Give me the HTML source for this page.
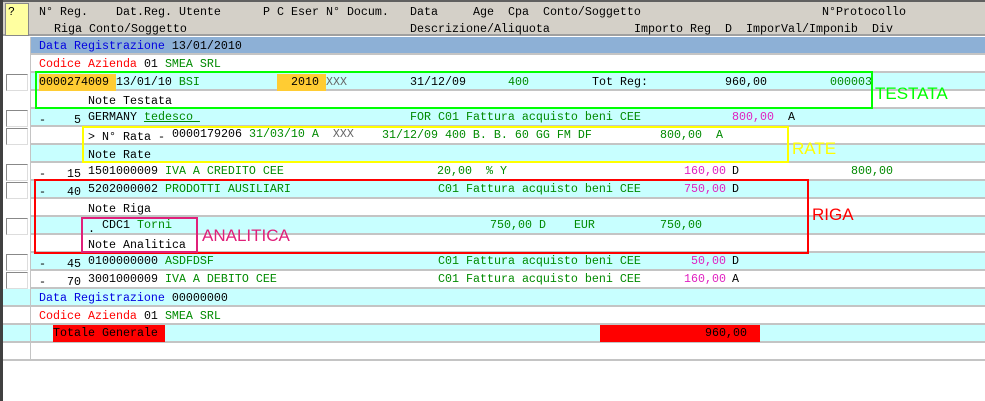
<!DOCTYPE html>
<html><head><meta charset="utf-8"><style>
*{margin:0;padding:0;box-sizing:border-box}
body{width:985px;height:401px;overflow:hidden;background:#fff;position:relative;font-family:"Liberation Mono",monospace;font-size:11.67px;line-height:14px;color:#000}
.a{position:absolute;white-space:pre}
.row{position:absolute;left:3px;width:982px;height:18px;border-bottom:2px solid #c4c4c4}
.c{background:#c8ffff}.w{background:#fff}.b{background:#8db0d6}
.g{color:#008a00}.m{color:#e020c0}.r{color:#f00}.bl{color:#0000e0}
.box{position:absolute;left:6px;width:22px;height:17px;background:#fff;border:1px solid #888;border-right-color:#ddd;border-bottom-color:#ddd}
.lbl{position:absolute;font-family:"Liberation Sans",sans-serif;font-size:17px;line-height:17px}
</style></head><body>
<div style="position:absolute;left:0;top:0;width:3px;height:401px;background:#404040"></div>
<div style="position:absolute;left:3px;top:0;width:982px;height:36px;background:#d4d0c8;border-top:2px solid #606060;border-bottom:2px solid #a0a0a0"></div>
<div style="position:absolute;left:5px;top:3px;width:24px;height:33px;background:#ffffa0;border:1px solid #888"></div>
<div class="a" style="left:8px;top:5px">?</div>
<div class="a" style="left:39px;top:5px">N° Reg.</div>
<div class="a" style="left:116px;top:5px">Dat.Reg. Utente</div>
<div class="a" style="left:263px;top:5px">P C Eser N° Docum.</div>
<div class="a" style="left:410px;top:5px">Data</div>
<div class="a" style="left:473px;top:5px">Age  Cpa  Conto/Soggetto</div>
<div class="a" style="left:822px;top:5px">N°Protocollo</div>
<div class="a" style="left:54px;top:22px">Riga Conto/Soggetto</div>
<div class="a" style="left:410px;top:22px">Descrizione/Aliquota</div>
<div class="a" style="left:634px;top:22px">Importo Reg</div>
<div class="a" style="left:725px;top:22px">D</div>
<div class="a" style="left:746px;top:22px">ImporVal/Imponib</div>
<div class="a" style="left:872px;top:22px">Div</div>

<div class="row b" style="top:37px;left:30px;width:955px"></div>
<div class="row w" style="top:55px"></div>
<div class="row c" style="top:73px"></div>
<div class="row w" style="top:91px"></div>
<div class="row c" style="top:109px"></div>
<div class="row w" style="top:127px"></div>
<div class="row c" style="top:145px"></div>
<div class="row w" style="top:163px"></div>
<div class="row c" style="top:181px"></div>
<div class="row w" style="top:199px"></div>
<div class="row c" style="top:217px"></div>
<div class="row w" style="top:235px"></div>
<div class="row c" style="top:253px"></div>
<div class="row w" style="top:271px"></div>
<div class="row c" style="top:289px"></div>
<div class="row w" style="top:307px"></div>
<div class="row c" style="top:325px"></div>
<div class="row w" style="top:343px"></div>
<div style="position:absolute;left:3px;top:37px;width:27px;height:252px;background:#fff"></div>
<div style="position:absolute;left:30px;top:37px;width:1px;height:324px;background:#c4c4c4"></div>
<div class="box" style="top:74px"></div><div class="box" style="top:110px"></div><div class="box" style="top:128px"></div>
<div class="box" style="top:164px"></div><div class="box" style="top:182px"></div><div class="box" style="top:218px"></div>
<div class="box" style="top:254px"></div><div class="box" style="top:272px"></div>

<div class="a bl" style="left:39px;top:39px">Data Registrazione <span style="color:#000">13/01/2010</span></div>
<div class="a r" style="left:39px;top:57px">Codice Azienda <span style="color:#000">01</span> <span class="g">SMEA SRL</span></div>

<div style="position:absolute;left:39px;top:74px;width:77px;height:17px;background:#ffcc33"></div>
<div style="position:absolute;left:277px;top:74px;width:49px;height:17px;background:#ffcc33"></div>
<div class="a" style="left:39px;top:75px">0000274009 13/01/10 <span class="g">BSI</span></div>
<div class="a" style="left:291px;top:75px">2010 <span style="color:#666">XXX</span></div>
<div class="a" style="left:410px;top:75px">31/12/09</div>
<div class="a g" style="left:508px;top:75px">400</div>
<div class="a" style="left:592px;top:75px">Tot Reg:</div>
<div class="a" style="left:725px;top:75px">960,00</div>
<div class="a g" style="left:830px;top:75px">000003</div>
<div class="a" style="left:88px;top:94px">Note Testata</div>

<div class="a" style="left:39px;top:113px">-    5</div>
<div class="a" style="left:88px;top:110px">GERMANY <span class="g" style="text-decoration:underline">tedesco </span></div>
<div class="a g" style="left:410px;top:110px">FOR C01 Fattura acquisto beni CEE</div>
<div class="a m" style="left:732px;top:110px">800,00</div>
<div class="a" style="left:788px;top:110px">A</div>

<div class="a" style="left:88px;top:130px">&gt; N° Rata -</div>
<div class="a" style="left:172px;top:127px">0000179206 <span class="g">31/03/10 A</span>  <span style="color:#666">XXX</span></div>
<div class="a g" style="left:382px;top:128px">31/12/09 400 B. B. 60 GG FM DF</div>
<div class="a g" style="left:660px;top:128px">800,00  A</div>
<div class="a" style="left:88px;top:148px">Note Rate</div>

<div class="a" style="left:39px;top:167px">-   15</div>
<div class="a" style="left:88px;top:164px">1501000009 <span class="g">IVA A CREDITO CEE</span></div>
<div class="a g" style="left:437px;top:164px">20,00  % Y</div>
<div class="a m" style="left:684px;top:164px">160,00</div>
<div class="a" style="left:732px;top:164px">D</div>
<div class="a g" style="left:851px;top:164px">800,00</div>

<div class="a" style="left:39px;top:185px">-   40</div>
<div class="a" style="left:88px;top:182px">5202000002 <span class="g">PRODOTTI AUSILIARI</span></div>
<div class="a g" style="left:438px;top:182px">C01 Fattura acquisto beni CEE</div>
<div class="a m" style="left:684px;top:182px">750,00</div>
<div class="a" style="left:732px;top:182px">D</div>
<div class="a" style="left:88px;top:202px">Note Riga</div>

<div class="a" style="left:88px;top:222px">.</div>
<div class="a" style="left:102px;top:218px">CDC1 <span class="g">Torni</span></div>
<div class="a g" style="left:490px;top:218px">750,00 D    EUR</div>
<div class="a g" style="left:660px;top:218px">750,00</div>
<div class="a" style="left:88px;top:238px">Note Analitica</div>

<div class="a" style="left:39px;top:257px">-   45</div>
<div class="a" style="left:88px;top:254px">0100000000 <span class="g">ASDFDSF</span></div>
<div class="a g" style="left:438px;top:254px">C01 Fattura acquisto beni CEE</div>
<div class="a m" style="left:691px;top:254px">50,00</div>
<div class="a" style="left:732px;top:254px">D</div>

<div class="a" style="left:39px;top:275px">-   70</div>
<div class="a" style="left:88px;top:272px">3001000009 <span class="g">IVA A DEBITO CEE</span></div>
<div class="a g" style="left:438px;top:272px">C01 Fattura acquisto beni CEE</div>
<div class="a m" style="left:684px;top:272px">160,00</div>
<div class="a" style="left:732px;top:272px">A</div>

<div class="a bl" style="left:39px;top:291px">Data Registrazione <span style="color:#000">00000000</span></div>
<div class="a r" style="left:39px;top:309px">Codice Azienda <span style="color:#000">01</span> <span class="g">SMEA SRL</span></div>

<div style="position:absolute;left:53px;top:325px;width:112px;height:17px;background:#f00"></div>
<div style="position:absolute;left:600px;top:325px;width:160px;height:17px;background:#f00"></div>
<div class="a" style="left:53px;top:326px">Totale Generale</div>
<div class="a" style="left:705px;top:326px">960,00</div>

<div style="position:absolute;left:35px;top:71px;width:838px;height:38px;border:2px solid #00ff00"></div>
<div class="lbl" style="left:875px;top:85px;color:#00ff00">TESTATA</div>
<div style="position:absolute;left:82px;top:126px;width:707px;height:37px;border:2px solid #ffff00"></div>
<div class="lbl" style="left:792px;top:140px;color:#ffff00">RATE</div>
<div style="position:absolute;left:34px;top:179px;width:775px;height:75px;border:2px solid #ff0000"></div>
<div class="lbl" style="left:812px;top:206px;color:#ff0000">RIGA</div>
<div style="position:absolute;left:81px;top:217px;width:117px;height:36px;border:2px solid #e0207a"></div>
<div class="lbl" style="left:202px;top:227px;color:#e0207a">ANALITICA</div>
</body></html>
